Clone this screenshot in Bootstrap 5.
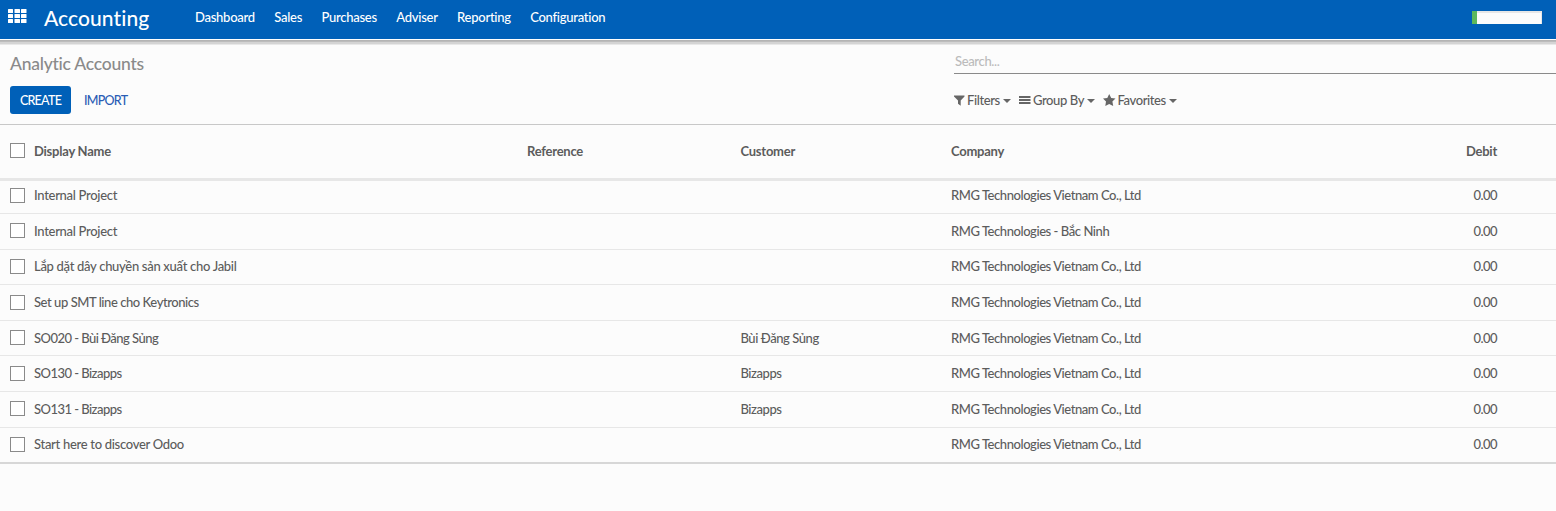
<!DOCTYPE html>
<html lang="en">
<head>
<meta charset="utf-8">
<meta name="viewport" content="width=device-width, initial-scale=1">
<title>Analytic Accounts - Accounting</title>
<link href="https://cdn.jsdelivr.net/npm/bootstrap@5.3.0/dist/css/bootstrap.min.css" rel="stylesheet">
<style>
body{font-family:Lato,"Noto Sans",sans-serif;font-size:13px;font-weight:500;line-height:20px;color:#5c5c5c;background:#fcfcfc;overflow:hidden;font-variant-ligatures:none}
.topbar{height:39px;background:#0060b8;padding:0}
.topbar-edge{height:6px;background:linear-gradient(#fff 0 1px,#b4b4b4 1px 2px,#bcbcbc 2px 3px,#d4d4d4 3px 5px,#e8e8e8 5px)}
.apps{margin:9px 0 0 8px;width:19px;height:14px}
.app-name{font-size:21px;line-height:26px;margin:5px 0 0 17px;width:151px;color:#fff;letter-spacing:.08px}
.menu{margin-top:7px;gap:19.4px;letter-spacing:-.26px}
.menu a{color:#fff;padding:0}
.company-box{width:70px;height:13px;margin:11px 14px 0 0;background:linear-gradient(#e7e7e7 2px,#fcfcfc 2px);border-left:5px solid #5cb85c;border-right:1px solid #e7e7e7}
.control{height:80px;border-bottom:1px solid #c8c8c8}
.control-left{margin-left:10px}
.page-title{font-size:17.5px;line-height:24px;letter-spacing:-.24px;color:#8a8a8a;margin:7px 0 10px;font-weight:500}
.btn-flat{height:28px;padding:1px 0 0;font-size:12.5px;font-weight:500;line-height:27px;border:0;border-radius:3px;letter-spacing:-.75px}
.btn-create{background:#0060b8;color:#fff;width:61px}
.btn-import{color:#2a5db5;margin-left:13px}
.search-side{width:602px}
.search-field{height:29px;border:0;border-bottom:1px solid #8a8a8a;border-radius:0;background:transparent;padding:3px 1px 0;font-size:13px;line-height:20px;font-weight:500;letter-spacing:-.35px}
.search-field::placeholder{color:#bbb;opacity:1}
.facets{margin-top:16px;letter-spacing:-.4px}
.facets svg{fill:#666;height:12px;flex:none}
.facet-filter{width:65px}.facet-group{width:84px}
.caret{border:4px solid transparent;border-top-color:#666;border-bottom:0;margin:1px 0 0 3px}
.accounts{table-layout:fixed;width:1556px;border-collapse:separate;border-spacing:0}
.accounts th,.accounts td{padding:0 0 .8px;vertical-align:middle;border-bottom:1px solid #e7e7e7;height:35.6px;line-height:20px;letter-spacing:-.44px}
.accounts th{height:56px;padding-bottom:2px;border-bottom:3px solid #e7e7e7;font-weight:700;letter-spacing:-.24px}
.accounts tbody tr:first-child td{height:33px;padding-bottom:3.6px}
.accounts tbody tr:last-child td{height:36.4px;border-bottom:2px solid #d7d7d7}
.accounts .wide{letter-spacing:-.3px}
.accounts .tight{letter-spacing:-.54px}
.accounts .text-end{padding-right:.5px}
.col-pick{width:34px}.col-name{width:493px}.col-ref{width:213.5px}.col-cust{width:210.5px}.col-comp{width:400px}.col-debit{width:146.5px}
.pick{width:15px;height:15px;border:1px solid #8a8a8a;background:#fff;margin-left:10px;appearance:none;display:block}
</style>
</head>
<body>
<nav class="navbar topbar d-flex flex-nowrap align-items-start justify-content-start">
  <svg class="apps" viewBox="0 0 19 14" fill="#fff"><rect width="5" height="4" rx=".5"/><rect x="6.5" width="5.5" height="4" rx=".5"/><rect x="13" width="5.5" height="4" rx=".5"/><rect y="5" width="5" height="4" rx=".5"/><rect x="6.5" y="5" width="5.5" height="4" rx=".5"/><rect x="13" y="5" width="5.5" height="4" rx=".5"/><rect y="10" width="5" height="4" rx=".5"/><rect x="6.5" y="10" width="5.5" height="4" rx=".5"/><rect x="13" y="10" width="5.5" height="4" rx=".5"/></svg>
  <div class="app-name">Accounting</div>
  <div class="menu d-flex">
    <a class="nav-link">Dashboard</a>
    <a class="nav-link">Sales</a>
    <a class="nav-link">Purchases</a>
    <a class="nav-link">Adviser</a>
    <a class="nav-link">Reporting</a>
    <a class="nav-link">Configuration</a>
  </div>
  <div class="company-box ms-auto"></div>
</nav>
<div class="topbar-edge"></div>
<section class="control d-flex justify-content-between">
  <div class="control-left me-auto">
    <h1 class="page-title">Analytic Accounts</h1>
    <div class="d-flex">
      <button class="btn btn-flat btn-create">CREATE</button>
      <button class="btn btn-flat btn-import">IMPORT</button>
    </div>
  </div>
  <div class="search-side">
    <input class="form-control search-field" placeholder="Search...">
    <div class="facets d-flex">
      <div class="facet-filter d-flex align-items-center"><svg width="13" viewBox="0 0 13 12"><path d="M0 1.500h10.500v1L6.700 6.500v5.200L4 9.800V6.500L0 2.500z"/></svg>Filters<i class="caret"></i></div>
      <div class="facet-group d-flex align-items-center"><svg width="14" viewBox="0 0 14 12"><path d="M0 2h11.500v2H0zM0 5h11.500v2H0zM0 8h11.500v2H0z"/></svg>Group By<i class="caret"></i></div>
      <div class="d-flex align-items-center"><svg width="14.5" viewBox="0 0 14.5 12"><path d="M6.200 0l2 3.900 4.300.6-3.100 3.100.8 4.400-4-2.100L2.300 12 3 7.600 0 4.500l4.300-.6z"/></svg>Favorites<i class="caret"></i></div>
    </div>
  </div>
</section>
<table class="accounts">
  <colgroup><col class="col-pick"><col class="col-name"><col class="col-ref"><col class="col-cust"><col class="col-comp"><col class="col-debit"><col></colgroup>
  <thead>
    <tr><th><input type="checkbox" class="pick"></th><th>Display Name</th><th>Reference</th><th>Customer</th><th>Company</th><th class="text-end">Debit</th><th></th></tr>
  </thead>
  <tbody>
    <tr><td><input type="checkbox" class="pick"></td><td class="wide">Internal Project</td><td></td><td></td><td>RMG Technologies Vietnam Co., Ltd</td><td class="text-end tight">0.00</td><td></td></tr>
    <tr><td><input type="checkbox" class="pick"></td><td class="wide">Internal Project</td><td></td><td></td><td>RMG Technologies - Bắc Ninh</td><td class="text-end tight">0.00</td><td></td></tr>
    <tr><td><input type="checkbox" class="pick"></td><td class="wide">Lắp dặt dây chuyền sản xuất cho Jabil</td><td></td><td></td><td>RMG Technologies Vietnam Co., Ltd</td><td class="text-end tight">0.00</td><td></td></tr>
    <tr><td><input type="checkbox" class="pick"></td><td>Set up SMT line cho Keytronics</td><td></td><td></td><td>RMG Technologies Vietnam Co., Ltd</td><td class="text-end tight">0.00</td><td></td></tr>
    <tr><td><input type="checkbox" class="pick"></td><td class="tight">SO020 - Bùi Đăng Sủng</td><td></td><td>Bùi Đăng Sủng</td><td>RMG Technologies Vietnam Co., Ltd</td><td class="text-end tight">0.00</td><td></td></tr>
    <tr><td><input type="checkbox" class="pick"></td><td class="tight">SO130 - Bizapps</td><td></td><td>Bizapps</td><td>RMG Technologies Vietnam Co., Ltd</td><td class="text-end tight">0.00</td><td></td></tr>
    <tr><td><input type="checkbox" class="pick"></td><td class="tight">SO131 - Bizapps</td><td></td><td>Bizapps</td><td>RMG Technologies Vietnam Co., Ltd</td><td class="text-end tight">0.00</td><td></td></tr>
    <tr><td><input type="checkbox" class="pick"></td><td class="wide">Start here to discover Odoo</td><td></td><td></td><td>RMG Technologies Vietnam Co., Ltd</td><td class="text-end tight">0.00</td><td></td></tr>
  </tbody>
</table>
<script src="https://cdn.jsdelivr.net/npm/bootstrap@5.3.0/dist/js/bootstrap.bundle.min.js"></script>
</body>
</html>
